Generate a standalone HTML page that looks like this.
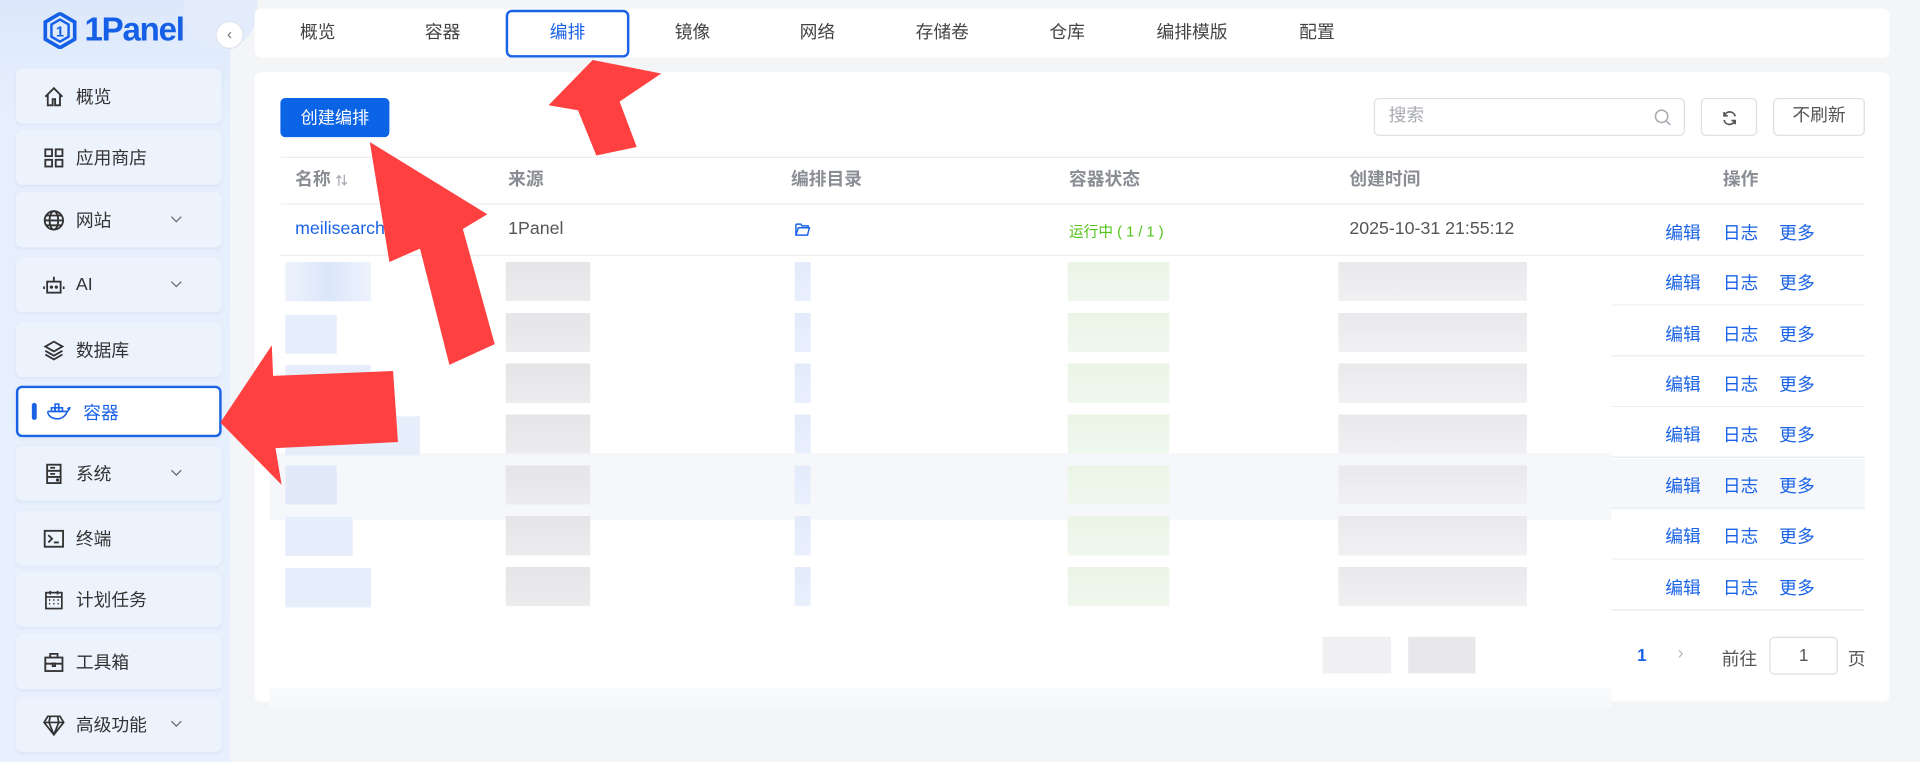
<!DOCTYPE html>
<html><head><meta charset="utf-8"><style>
*{box-sizing:border-box;margin:0;padding:0}
html,body{width:1920px;height:761px;overflow:hidden;background:#f4f5f7}
#w{position:absolute;left:0;top:0;width:1568px;height:622px;transform:scale(1.22449);transform-origin:0 0;font-family:"Liberation Sans","Noto Sans CJK SC",sans-serif;font-size:14px;color:#333}
.abs{position:absolute}
#side{left:0;top:0;width:188px;height:622px;background:linear-gradient(180deg,#dce8fb 0%,#e6effd 15%,#e8f0fd 100%)}
.mi{position:absolute;left:13px;width:168px;height:45px;background:#edf3fd;border-radius:5px;display:flex;align-items:center;padding-left:22px;font-size:14.5px;color:#333;box-shadow:0 1px 2px rgba(150,170,210,.15)}
.mi svg{width:18px;height:18px;margin-right:9px;flex:none}
.mi .ch{position:absolute;right:22px;top:16px;width:12px;height:12px}
.mi.act{background:#fff;border:2px solid #1a63e6;color:#1a63e6}
.card{background:#fff;border-radius:5px}
.tab{position:absolute;top:8px;height:39px;line-height:39px;width:101px;text-align:center;font-size:14.5px;color:#444}
.th{position:absolute;top:128px;height:39px;line-height:39px;font-weight:bold;color:#8a8d93;font-size:14.5px}
.row{position:absolute;left:229px;width:1294px;height:41.5px;border-bottom:1px solid #ebeef5}
.op{position:absolute;font-size:14.5px;color:#1a63e6}
.bl{position:absolute;background:#e3ebf9}
</style></head><body><div id="w">
<div id="side" class="abs"></div>
<div class="abs" style="left:150px;top:0;width:60px;height:40px;border-radius:0 0 40px 40px;background:#e3ecfb"></div>
<!-- logo -->
<svg class="abs" style="left:34px;top:10px" width="30" height="30" viewBox="0 0 30 30"><polygon points="15,1 27,8 27,22 15,29 3,22 3,8" fill="none" stroke="#1560e6" stroke-width="3"/><polygon points="15,6 22,10 22,20 15,24 8,20 8,10" fill="none" stroke="#1560e6" stroke-width="2"/><text x="15" y="20" font-size="12" font-weight="bold" text-anchor="middle" fill="#1560e6" font-family="Liberation Sans">1</text></svg>
<div class="abs" style="left:69px;top:9px;font-size:27px;font-weight:bold;color:#1560e6;letter-spacing:-1px">1Panel</div>
<div class="abs" style="left:176px;top:17px;width:23px;height:23px;border-radius:50%;background:#fff;border:1px solid #dde3ee;text-align:center;line-height:21px;color:#666;font-size:12px">‹</div>

<div class="mi" style="top:56px"><svg viewBox="0 0 18 18" fill="none" stroke="#333" stroke-width="1.5"><path d="M2 9L9 2l7 7M4 7v9h4v-5h2v5h4V7"/></svg>概览</div>
<div class="mi" style="top:106px"><svg viewBox="0 0 18 18" fill="none" stroke="#333" stroke-width="1.5"><rect x="2" y="2" width="5.5" height="5.5"/><rect x="10.5" y="2" width="5.5" height="5.5"/><rect x="2" y="10.5" width="5.5" height="5.5"/><rect x="10.5" y="10.5" width="5.5" height="5.5"/></svg>应用商店</div>
<div class="mi" style="top:157px"><svg viewBox="0 0 18 18" fill="none" stroke="#333" stroke-width="1.5"><circle cx="9" cy="9" r="7.5"/><ellipse cx="9" cy="9" rx="3.5" ry="7.5"/><path d="M1.5 9h15M3 5h12M3 13h12"/></svg>网站<svg class="ch" viewBox="0 0 12 12" fill="none" stroke="#666"><path d="M2 4l4 4 4-4"/></svg></div>
<div class="mi" style="top:210px"><svg viewBox="0 0 18 18" fill="none" stroke="#333" stroke-width="1.5"><rect x="3.5" y="6" width="11" height="9"/><path d="M9 2v4M1 10v2M17 10v2"/><circle cx="7" cy="10.5" r=".6" fill="#333"/><circle cx="11" cy="10.5" r=".6" fill="#333"/></svg>AI<svg class="ch" viewBox="0 0 12 12" fill="none" stroke="#666"><path d="M2 4l4 4 4-4"/></svg></div>
<div class="mi" style="top:263px"><svg viewBox="0 0 18 18" fill="none" stroke="#333" stroke-width="1.5"><path d="M9 2l7 4-7 4-7-4zM2 9.5l7 4 7-4M2 12.5l7 4 7-4"/></svg>数据库</div>
<div class="mi act" style="top:315px;height:42px;padding-left:11px"><span style="width:4px;height:14px;background:#1a63e6;border-radius:2px;margin-right:7px"></span><svg viewBox="0 0 20 18" fill="none" stroke="#1a63e6" stroke-width="1.3" style="width:22px"><path d="M1 9h16c1-1 2-2 2-3-1 0-2 1-2 1M1 9c0 4 4 6 8 6s7-3 8-6"/><rect x="4" y="6" width="3" height="3"/><rect x="7" y="6" width="3" height="3"/><rect x="10" y="6" width="3" height="3"/><rect x="7" y="3" width="3" height="3"/></svg>容器</div>
<div class="mi" style="top:364px"><svg viewBox="0 0 18 18" fill="none" stroke="#333" stroke-width="1.5"><rect x="3.5" y="1.5" width="11" height="15"/><path d="M3.5 6.5h11M3.5 11.5h11M6 4h4M6 9h4"/><circle cx="12" cy="14" r=".6" fill="#333"/></svg>系统<svg class="ch" viewBox="0 0 12 12" fill="none" stroke="#666"><path d="M2 4l4 4 4-4"/></svg></div>
<div class="mi" style="top:417px"><svg viewBox="0 0 18 18" fill="none" stroke="#333" stroke-width="1.5"><rect x="1.5" y="2.5" width="15" height="13"/><path d="M4.5 6l3 3-3 3M9 12h4"/></svg>终端</div>
<div class="mi" style="top:467px"><svg viewBox="0 0 18 18" fill="none" stroke="#333" stroke-width="1.4"><rect x="2.5" y="3" width="13" height="13"/><path d="M2.5 6.5h13M6 1.5v3M12 1.5v3M5 9h1M8.5 9h1M12 9h1M5 12h1M8.5 12h1M12 12h1"/></svg>计划任务</div>
<div class="mi" style="top:518px"><svg viewBox="0 0 18 18" fill="none" stroke="#333" stroke-width="1.5"><rect x="2" y="5" width="14" height="11"/><path d="M6 5V2h6v3M2 10h14M8 9v3h2V9"/></svg>工具箱</div>
<div class="mi" style="top:569px"><svg viewBox="0 0 18 18" fill="none" stroke="#333" stroke-width="1.4"><path d="M4 2h10l3 5-8 10L1 7zM1 7h16M6 2l-1 5 4 10 4-10-1-5"/></svg>高级功能<svg class="ch" viewBox="0 0 12 12" fill="none" stroke="#666"><path d="M2 4l4 4 4-4"/></svg></div>

<!-- tabs -->
<div class="abs card" style="left:208px;top:7px;width:1335px;height:40px"></div>
<div class="tab" style="left:209px">概览</div>
<div class="tab" style="left:311px">容器</div>
<div class="tab" style="left:413px;border:2px solid #1a63e6;border-radius:5px;color:#1a63e6;line-height:35px">编排</div>
<div class="tab" style="left:515px">镜像</div>
<div class="tab" style="left:617px">网络</div>
<div class="tab" style="left:719px">存储卷</div>
<div class="tab" style="left:821px">仓库</div>
<div class="tab" style="left:923px">编排模版</div>
<div class="tab" style="left:1025px">配置</div>

<!-- main card -->
<div class="abs card" style="left:208px;top:59px;width:1335px;height:514px"></div>
<div class="abs" style="left:229px;top:80px;width:89px;height:32px;background:#0b63e5;border-radius:4px;color:#fff;text-align:center;line-height:32px;font-size:14px">创建编排</div>
<div class="abs" style="left:1122px;top:80px;width:254px;height:31px;border:1px solid #dcdfe6;border-radius:4px;padding-left:11px;line-height:29px;color:#a8abb2;font-size:14.5px">搜索<svg class="abs" style="right:10px;top:8px" width="14" height="14" viewBox="0 0 14 14" fill="none" stroke="#a8abb2" stroke-width="1.3"><circle cx="6" cy="6" r="5"/><path d="M10 10l3 3"/></svg></div>
<div class="abs" style="left:1389px;top:80px;width:46px;height:31px;border:1px solid #dcdfe6;border-radius:4px"><svg class="abs" style="left:16px;top:9px" width="13" height="13" viewBox="0 0 13 13" fill="none" stroke="#555" stroke-width="1.4"><path d="M11 5A4.5 4.5 0 0 0 2.5 4M2 8a4.5 4.5 0 0 0 8.5 1M2 1.5v3h3M11 11.5v-3H8"/></svg></div>
<div class="abs" style="left:1448px;top:80px;width:75px;height:31px;border:1px solid #dcdfe6;border-radius:4px;text-align:center;line-height:29px;color:#555;font-size:14.5px">不刷新</div>

<div class="abs" style="left:229px;top:128px;width:1294px;height:39px;border-top:1px solid #ebeef5;border-bottom:1px solid #ebeef5"></div>
<div class="th" style="left:241px">名称 <span style="font-size:10px;color:#a8abb2">⇅</span></div>
<div class="th" style="left:415px">来源</div>
<div class="th" style="left:646px">编排目录</div>
<div class="th" style="left:873px">容器状态</div>
<div class="th" style="left:1102px">创建时间</div>
<div class="th" style="left:1407px">操作</div>

<div class="abs" style="left:220px;top:370px;width:1096px;height:55px;background:#f5f7fa"></div>
<div class="abs" style="left:1316px;top:375px;width:207px;height:41px;background:#f5f7fa"></div>

<div class="row" style="top:167px"></div>
<div class="abs" style="left:241px;top:179px;color:#1a63e6;font-size:14.5px">meilisearch</div>
<div class="abs" style="left:415px;top:179px;color:#555;font-size:14.5px">1Panel</div>
<svg class="abs" style="left:649px;top:182px" width="13" height="11" viewBox="0 0 13 11" fill="none" stroke="#1a63e6" stroke-width="1.2"><path d="M1 1h4l1 1.5h5V4M1 1v9h9.5L12 4H3L1 10"/></svg>
<div class="abs" style="left:873px;top:180px;color:#52c41a;font-size:12px">运行中 ( 1 / 1 )</div>
<div class="abs" style="left:1102px;top:179px;color:#555;font-size:14.5px">2025-10-31 21:55:12</div>

<!-- blurred placeholders rows 2-8 -->
<div class="bl" style="left:233px;top:214px;width:70px;height:32px;background:linear-gradient(90deg,#eef3fd,#dbe6fa,#eef3fd)"></div>
<div class="bl" style="left:233px;top:257px;width:42px;height:32px;background:#e6edfb"></div>
<div class="bl" style="left:233px;top:298px;width:70px;height:32px;background:#e6edfb"></div>
<div class="bl" style="left:233px;top:340px;width:110px;height:32px;background:#e6edfb"></div>
<div class="bl" style="left:233px;top:380px;width:42px;height:32px;background:#e1e9f9"></div>
<div class="bl" style="left:233px;top:422px;width:55px;height:32px;background:#e6edfb"></div>
<div class="bl" style="left:233px;top:464px;width:70px;height:32px;background:#e6edfb"></div>

<div style="position:absolute;left:413px;top:214px;width:69px;height:282px;background:repeating-linear-gradient(180deg,#e5e5e8 0,#ececee 32px,transparent 32px,transparent 41.5px)"></div>
<div style="position:absolute;left:649px;top:214px;width:13px;height:282px;background:repeating-linear-gradient(180deg,#e3ebfb 0,#e9effc 32px,transparent 32px,transparent 41.5px)"></div>
<div style="position:absolute;left:872px;top:214px;width:83px;height:282px;background:repeating-linear-gradient(180deg,#eaf5e6 0,#f0f8ee 32px,transparent 32px,transparent 41.5px)"></div>
<div style="position:absolute;left:1093px;top:214px;width:154px;height:282px;background:repeating-linear-gradient(180deg,#e9e9ec 0,#f1f1f3 32px,transparent 32px,transparent 41.5px)"></div>

<div style="position:absolute;left:1316px;top:208px;width:207px;height:292px;background:repeating-linear-gradient(180deg,transparent 0,transparent 40.5px,#ebeef5 40.5px,#ebeef5 41.5px)"></div>

<div class="op" style="left:1360px;top:179px">编辑</div><div class="op" style="left:1407px;top:179px">日志</div><div class="op" style="left:1453px;top:179px">更多</div>
<div class="op" style="left:1360px;top:220px">编辑</div><div class="op" style="left:1407px;top:220px">日志</div><div class="op" style="left:1453px;top:220px">更多</div>
<div class="op" style="left:1360px;top:262px">编辑</div><div class="op" style="left:1407px;top:262px">日志</div><div class="op" style="left:1453px;top:262px">更多</div>
<div class="op" style="left:1360px;top:303px">编辑</div><div class="op" style="left:1407px;top:303px">日志</div><div class="op" style="left:1453px;top:303px">更多</div>
<div class="op" style="left:1360px;top:344px">编辑</div><div class="op" style="left:1407px;top:344px">日志</div><div class="op" style="left:1453px;top:344px">更多</div>
<div class="op" style="left:1360px;top:386px">编辑</div><div class="op" style="left:1407px;top:386px">日志</div><div class="op" style="left:1453px;top:386px">更多</div>
<div class="op" style="left:1360px;top:427px">编辑</div><div class="op" style="left:1407px;top:427px">日志</div><div class="op" style="left:1453px;top:427px">更多</div>
<div class="op" style="left:1360px;top:469px">编辑</div><div class="op" style="left:1407px;top:469px">日志</div><div class="op" style="left:1453px;top:469px">更多</div>

<!-- pagination -->
<div class="abs" style="left:1080px;top:520px;width:56px;height:30px;background:#f0f0f2"></div>
<div class="abs" style="left:1150px;top:520px;width:55px;height:30px;background:#e8e8ea"></div>
<div class="abs" style="left:1337px;top:527px;color:#1a63e6;font-weight:bold;font-size:14px">1</div>
<div class="abs" style="left:1370px;top:525px;color:#bbb;font-size:15px">›</div>
<div class="abs" style="left:1406px;top:527px;color:#555;font-size:14.5px">前往</div>
<div class="abs" style="left:1445px;top:520px;width:56px;height:31px;border:1px solid #dcdfe6;border-radius:4px;text-align:center;line-height:29px;color:#555">1</div>
<div class="abs" style="left:1509px;top:527px;color:#555;font-size:14.5px">页</div>
<div class="abs" style="left:220px;top:562px;width:1096px;height:16px;background:#f8f9fb"></div>

<!-- red arrows -->
<svg class="abs" style="left:0;top:0" width="1568" height="622" viewBox="0 0 1568 622">
<polygon fill="#ff4040" points="484,49 540,60 506,83 520,120 487,127 472,90 448,86"/>
<polygon fill="#ff4040" points="302,116 398,175 378,187 404,281 367,298 343,203 318,214"/>
<polygon fill="#ff4040" points="180,345 222,282 223,307 321,303 325,361 225,366 230,396"/>
</svg>
</div></body></html>
